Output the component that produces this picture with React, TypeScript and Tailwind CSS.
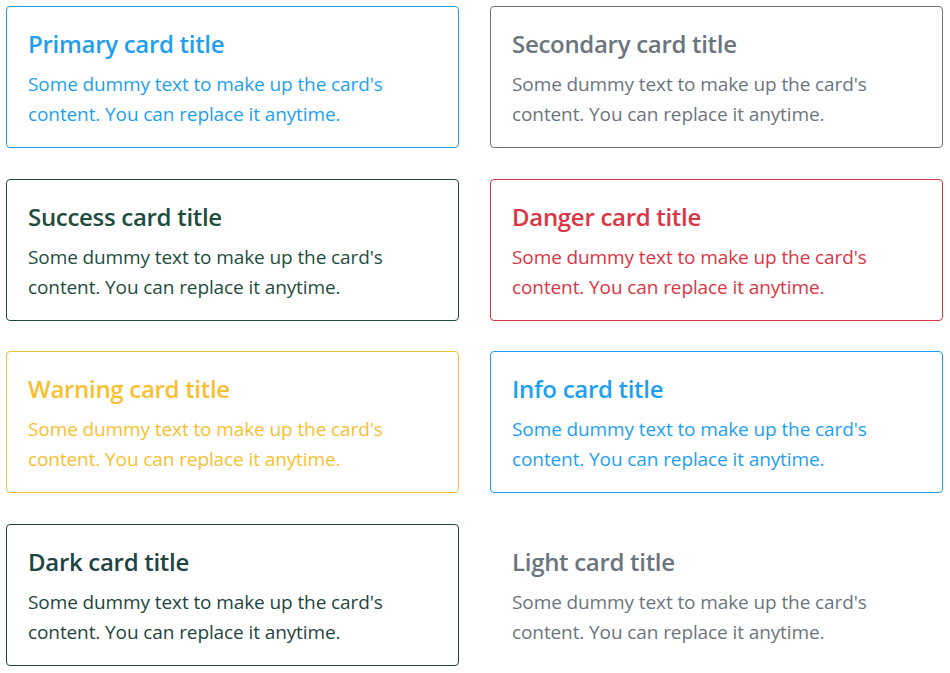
const cards = [
  { name: "Primary", border: "border-[#1e9ff2]", title: "text-[#1e9ff2]", body: "text-[#1e9ff2]" },
  { name: "Secondary", border: "border-[#6c757d]", title: "text-[#6c757d]", body: "text-[#6c757d]" },
  { name: "Success", border: "border-[#1e4d40]", title: "text-[#1e4d40]", body: "text-[#1e4d40]" },
  { name: "Danger", border: "border-[#dc3545]", title: "text-[#dc3545]", body: "text-[#dc3545]" },
  { name: "Warning", border: "border-[#f8bf30]", title: "text-[#f8bf30]", body: "text-[#f8bf30]" },
  { name: "Info", border: "border-[#1e9ff2]", title: "text-[#1e9ff2]", body: "text-[#1e9ff2]" },
  { name: "Dark", border: "border-[#1e4540]", title: "text-[#1e4540]", body: "text-[#1e4540]" },
  { name: "Light", border: "border-white", title: "text-[#6c757d]", body: "text-[#6c757d]" },
];

export default function App() {
  return (
    <div className="min-h-screen bg-white font-['Open_Sans',sans-serif]">
      <div className="grid grid-cols-2 gap-x-[31px] gap-y-[30.7px] pl-[6px] pr-[7px] pt-[6px]">
        {cards.map((c) => (
          <div key={c.name} className={`border rounded-[4px] px-[21px] pt-[22px] pb-[18px] ${c.border}`}>
            <h5 className={`text-[24px] leading-[29px] font-semibold mb-[11px] tracking-[-0.3px] ${c.title}`}>
              {c.name} card title
            </h5>
            <p className={`text-[19px] leading-[30px] tracking-[-0.1px] ${c.body}`}>
              Some dummy text to make up the card's
              <br />
              content. You can replace it anytime.
            </p>
          </div>
        ))}
      </div>
    </div>
  );
}
